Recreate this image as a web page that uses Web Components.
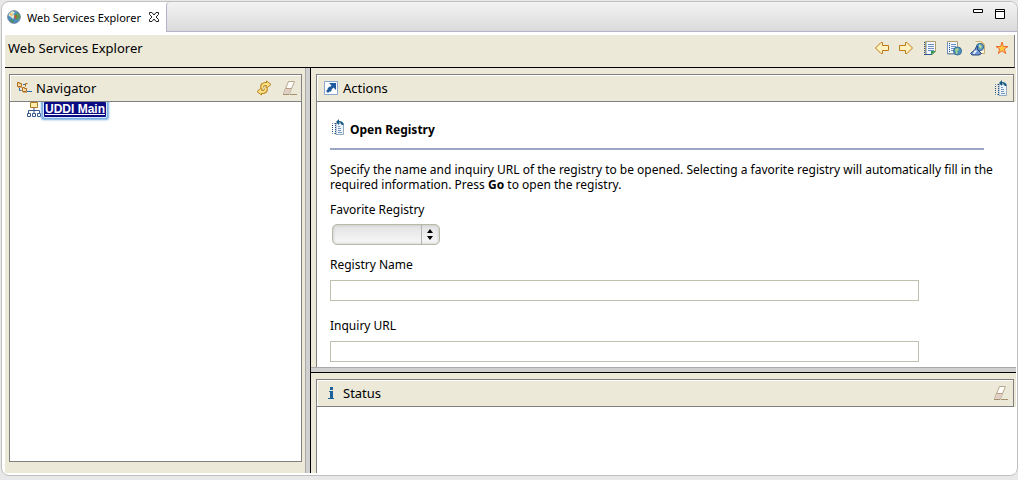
<!DOCTYPE html>
<html lang="en">
<head>
<meta charset="utf-8">
<title>Web Services Explorer</title>
<style>
  html, body { height: 100%; }
  body {
    margin: 0;
    background: #e8e8e8;
    color: #000;
    font: 12px/15px "Noto Sans", "Open Sans", sans-serif;
    overflow: hidden;
  }
</style>
</head>
<body>
<wse-window>
  <wse-toolbar slot="toolbar" heading="Web Services Explorer"></wse-toolbar>
  <wse-pane slot="navigator" heading="Navigator" icon="tree" tools="refresh,eraser" boxed>
    <wse-tree></wse-tree>
  </wse-pane>
  <wse-pane slot="actions" heading="Actions" icon="action" tools="registry">
    <wse-open-registry></wse-open-registry>
  </wse-pane>
  <wse-pane slot="status" heading="Status" icon="info" tools="eraser"></wse-pane>
</wse-window>

<script>
const sheetLines = (x, y, rows, w) =>
  Array.from({ length: rows }, (_, i) => `<path d="M${x} ${y + i * 2}h${w}" stroke="#6d8fc4"/>`).join('');

const ICONS = {
  globe: `<circle cx="8" cy="8" r="6.3" fill="#4a8ec6" stroke="#6b7f95"/>
    <path d="M2.5 6.500C3 4 5 2.300 7.500 2.200L9 4 7 5l2 2-2 3-2-2z" fill="#e4ecc8"/>
    <path d="M10 4l3 1 .8 3-2 3-2-1-1-3z" fill="#5c9a4a"/><path d="M4 10l3 1 1 3-3-1z" fill="#4f8f58"/>
    <path d="M8 6l3 1-2 4z" fill="#c1503c"/><path d="M4 4l3 1-1 2-2-1z" fill="#e8b56a"/>`,
  tree: `<path d="M7 4.500h2M3.500 7v3.500h2M11 11.500h5" fill="none" stroke="#2f6ea8"/>
    <g fill="#fbdca4" stroke="#b06c1c"><path d="M1.500 6.500v-4h2v1h2v3z"/><path d="M6.500 11.500v-4h2v1h2v3z"/><path d="M9.500 6.500v-3h2"/></g>
    <path d="M2 7.500h4M7 12.500h4" stroke="#d3a373"/>`,
  refresh: `<g fill="none" stroke-linejoin="round"><path d="M6.500 8C5.500 5.500 7 3.500 11 4M9.500 8c1 2.500-.500 4.500-4.500 4" stroke="#b98218" stroke-width="4"/>
    <path d="M10.500 1l4.500 3.500-5 4zM5.500 15L1 11.500l5-4z" fill="#ffe48a" stroke="#b98218"/>
    <path d="M6.500 8C5.500 5.500 7 3.500 11.500 4M9.500 8c1 2.500-.500 4.500-5 4" stroke="#ffe48a" stroke-width="2"/></g>`,
  eraser: `<path d="M6.500 1.500h6L7 14.500H1.500v-1z" fill="#fefdfb" stroke="#b5a68e"/><path d="M4.500 8h5l-2.500 6H2v-1z" fill="#e0cfc2"/><path d="M4 8.500h5.500" stroke="#b89c84"/><path d="M8 14.500h7M1 14.500h6" stroke="#a3916f"/>`,
  action: `<path d="M1.500 1.500h13v13h-13z" fill="#fff" stroke="#8aa6cc"/><path d="M6 3h7v7l-2.500-2.500-2 2 .500.500-2 2-.500-.500L5 13l-2-2 2-2-.500-.500 2-2 .500.500 1.500-1.500z" fill="#1d5b9e"/>`,
  registry: `<path d="M6 4.500h7.500v11H6z" fill="#eef4fb" stroke="#93a9bd"/><path d="M8 7.500h2M8 9.500h3M8 11.500h3M8 13.500h4" stroke="#7697bd"/>
    <path d="M2.500 4v11M5.500 4v11" stroke="#1c4d83" stroke-dasharray="1 1"/><path d="M2 4.500h4M2 14.500h4" stroke="#7f9db8" stroke-dasharray="1 1"/>
    <path d="M6 3l3-3v2c3 0 4.500 1 4.500 4h-2c0-2-1-2.500-2.500-2.500V6z" fill="#155a84"/>`,
  info: `<path d="M7 2h3v3H7zM6 6h4v7h1v1H5v-1h2V7H6z" fill="#1b639c"/>`,
  uddi: `<path d="M8 6v3M2.500 11V8.500h11V11M8 8v3" fill="none" stroke="#38598c"/><path d="M4.500.500h7v5h-7z" fill="#ffedac" stroke="#b07a24"/>
    <path d="M1.500 11.500h3v3h-3zM6.500 11.500h3v3h-3zM11.500 11.500h3v3h-3z" fill="#fff" stroke="#38598c"/>`,
  back: `<path d="M1.500 8L7 2.500h1.500v3h6v5h-6v3H7z" fill="#fff0c0" stroke="#c17a12"/>`,
  forward: `<path d="M14.500 8L9 2.500H7.500v3h-6v5h6v3H9z" fill="#fff0c0" stroke="#c17a12"/>`,
  history: `<path d="M3.500 1.500h10v10l-3 3h-7z" fill="#f3f8ff" stroke="#b09c68"/><path d="M4.500 2v12" stroke="#a9bedd"/>${sheetLines(6, 4.5, 4, 6)}
    <path d="M2.500 2v13" stroke="#1c4d83" stroke-dasharray="1 1"/><path d="M3 14.500h7" stroke="#31559a"/><path d="M9 15v-4h5z" fill="#2f9a55"/>`,
  wsdl: `<path d="M1.500 1.500h10v12h-10z" fill="#f3f8ff" stroke="#b09c68"/><path d="M1.500 2v12h8" fill="none" stroke="#6d8fc4"/>${sheetLines(5, 4.5, 4, 5)}
    <path d="M3.500 3v10" stroke="#1c4d83" stroke-dasharray="1 1"/><circle cx="11.500" cy="11" r="4" fill="#4c91bd" stroke="#3a6f96"/><path d="M9 9l3-1 1 2-2 1 1 2-2 1z" fill="#a7d38c"/>`,
  wsil: `<path d="M5.500 1.500h6l3 3v9h-8" fill="#fff6dc" stroke="#c7ad72"/><path d="M11 1v4h4z" fill="#f0c878"/><circle cx="10" cy="7" r="3.700" fill="#5897bd" stroke="#3b6d98"/><path d="M9 4l3 2-1 3-2-2z" fill="#b9dba0"/>
    <path d="M6.500 6.500h1v3l4 4-2.500 1.500H2L.500 13.500l4.500-4z" fill="#6f94cf" stroke="#27477f"/><path d="M4.500 10.500h3l-3 3.500H3z" fill="#eef4ff"/>`,
  star: `<path d="M8 2l1.400 4.500h4.600l-3.700 2.500 1.400 4.500L8 10.800l-3.700 2.700 1.400-4.500L2 6.500h4.600z" fill="#ffc845" stroke="#ee6c30"/>`,
  close: `<path d="M3.500 3.500h2.500l2 2.500 2-2.500h2.500v2L10 8l2.500 2.500v2H10L8 10l-2 2.500H3.500v-2L6 8 3.500 5.500z" fill="#fff" stroke="#222"/>`,
  minimize: `<path d="M3.500 3.500h9v3h-9z" fill="#fff" stroke="#000"/>`,
  maximize: `<path d="M3.500 3.500h9v9h-9zM3 5.500h10" fill="#fff" stroke="#000"/>`
};

class WseElement extends HTMLElement {
  connectedCallback() {
    if (this.shadowRoot) return;
    this.attachShadow({ mode: 'open' }).innerHTML = this.render();
  }
}

customElements.define('wse-icon', class extends WseElement {
  render() {
    return `<style>:host { display: block; flex: none; width: 16px; height: 16px; } svg { display: block; }</style>
      <svg width="16" height="16" viewBox="0 0 16 16" aria-hidden="true">${ICONS[this.getAttribute('name')]}</svg>`;
  }
});

const button = (name, label) =>
  `<button type="button" aria-label="${label}"><wse-icon name="${name}"></wse-icon></button>`;
const buttonCss = 'button { display: block; padding: 0; border: 0; background: none; }';

customElements.define('wse-window', class extends WseElement {
  render() {
    return `<style>
      :host { display: flex; flex-direction: column; box-sizing: border-box; height: 100vh; padding: 1px 0 4px 1px; }
      .shell { flex: 1; min-height: 0; display: flex; flex-direction: column; background: #fff;
        border: 1px solid #c0c0c0; border-radius: 8px; overflow: hidden; }
      .tabs { flex: none; display: flex; height: 30px; }
      .tab { display: flex; align-items: center; gap: 5px; padding: 0 4px; font-size: 11px; white-space: nowrap; }
      .rest { flex: 1; display: flex; justify-content: flex-end; gap: 6px; padding: 4px 9px 0 0;
        background: linear-gradient(#f3f3f3, #dadada); border: solid #b4b4cc; border-width: 0 0 1px 1px;
        border-top-left-radius: 4px; }
      ${buttonCss}
      .rest button { align-self: flex-start; }
      .page { flex: 1; min-height: 0; display: flex; flex-direction: column; margin: 3px 1px 2px 3px; }
      .frames { flex: 1; min-height: 0; display: grid; grid-template-columns: 300px 6px minmax(0, 1fr); background: #ece9d8; }
      .right { display: grid; grid-template-rows: 3fr 6px 1fr; min-width: 0; min-height: 0; }
      .split { background: #d0d0d0; }
      .v { border-right: 1px solid #000; border-left: 1px solid #aaa; }
      .h { border-bottom: 1px solid #000; border-top: 1px solid #aaa; }
    </style>
    <div class="shell">
      <div class="tabs">
        <div class="tab"><wse-icon name="globe"></wse-icon><span>Web Services Explorer</span>${button('close', 'Close')}</div>
        <div class="rest">${button('minimize', 'Minimize')}${button('maximize', 'Maximize')}</div>
      </div>
      <div class="page">
        <slot name="toolbar"></slot>
        <div class="frames">
          <slot name="navigator"></slot>
          <div class="split v"></div>
          <div class="right">
            <slot name="actions"></slot>
            <div class="split h"></div>
            <slot name="status"></slot>
          </div>
        </div>
      </div>
    </div>`;
  }
});

customElements.define('wse-toolbar', class extends WseElement {
  render() {
    return `<style>
      :host { display: flex; flex: none; align-items: center; justify-content: space-between; box-sizing: border-box; height: 33px;
        margin-right: 1px; padding: 0 4px 6px 3px; background: #ece9d8; border-bottom: 1px solid #000; border-right: 1px solid #808080; }
      h1 { margin: 0; font-size: 13px; font-weight: normal; }
      nav { display: flex; gap: 8px; }
      ${buttonCss}
    </style>
    <h1>${this.getAttribute('heading')}</h1>
    <nav>${button('back', 'Back')}${button('forward', 'Forward')}${button('history', 'UDDI page')}${button('wsdl', 'WSDL page')}${button('wsil', 'WSIL page')}${button('star', 'Favorites')}</nav>`;
  }
});

customElements.define('wse-pane', class extends WseElement {
  render() {
    const tools = this.getAttribute('tools').split(',').map(t => button(t, t)).join('');
    return `<style>
      :host { display: flex; flex-direction: column; min-width: 0; min-height: 0; overflow: hidden; padding: 6px 0 0 5px; }
      :host([boxed]) { padding: 6px 3px 11px 4px; }
      header { flex: none; display: flex; align-items: center; box-sizing: border-box; height: 28px; margin-right: 2px; padding: 0 4px 0 6px;
        background: #ece9d8; border: 1px solid #808080; box-shadow: inset 1px 1px #fff; gap: 4px; }
      :host([boxed]) header { margin-right: 0; padding-right: 3px; }
      h2 { flex: 1; margin: 0; font-size: 13px; font-weight: normal; }
      .tools { display: flex; gap: 10px; }
      .body { flex: 1; min-height: 0; overflow: hidden; background: #fff; border-left: 1px solid #808080; }
      :host([boxed]) .body { border-right: 1px solid #808080; border-bottom: 1px solid #808080; }
      ${buttonCss}
    </style>
    <header><wse-icon name="${this.getAttribute('icon')}"></wse-icon><h2>${this.getAttribute('heading')}</h2><div class="tools">${tools}</div></header>
    <div class="body"><slot></slot></div>`;
  }
});

customElements.define('wse-tree', class extends WseElement {
  render() {
    return `<style>
      :host { display: flex; align-items: flex-start; gap: 2px; padding-left: 16px; }
      a { padding: 0 1px; background: #0a0a82; color: #fff; font: bold 12px/15px "Liberation Sans", sans-serif;
        border-radius: 1px; box-shadow: 0 0 0 1px #d4e8fa, 0 0 2px 3px #78ade0; }
    </style>
    <wse-icon name="uddi"></wse-icon><a href="#uddi">UDDI Main</a>`;
  }
});

customElements.define('wse-open-registry', class extends WseElement {
  render() {
    return `<style>
      :host { display: block; padding: 16px 32px 0 13px; }
      h3 { display: flex; align-items: center; gap: 4px; margin: 0; height: 18px; font-size: 12px; }
      h3 span { padding-top: 4px; }
      hr { height: 2px; margin: 12px 0; border: 0; background: #9ba5c5; }
      p { margin: 0 0 10px; white-space: nowrap; }
      label { display: block; }
      .select { display: block; width: 108px; margin: 7px 0 12px 2px; position: relative; }
      select { display: block; appearance: none; box-sizing: border-box; width: 100%; height: 21px; margin: 0;
        border: 1px solid #b9b9a8; border-radius: 5px; background: linear-gradient(#e2e2e2, #f8f8f8); box-shadow: inset 0 0 3px #bbb; }
      .select svg { position: absolute; right: 0; top: 0; pointer-events: none; }
      input { display: block; box-sizing: border-box; width: 90%; height: 21px; margin: 8px 0 17px; padding: 2px 4px;
        border: 1px solid #c0c0ae; background: #fff; font: inherit; }
    </style>
    <h3><wse-icon name="registry"></wse-icon><span>Open Registry</span></h3>
    <hr>
    <p>Specify the name and inquiry URL of the registry to be opened. Selecting a favorite registry will automatically fill in the<br>required information. Press <b>Go</b> to open the registry.</p>
    <label for="favorite">Favorite Registry</label>
    <div class="select"><select id="favorite"></select>
      <svg width="19" height="21" viewBox="0 0 19 21" aria-hidden="true"><path d="M.5 1v19" stroke="#b4b4b4"/><path d="M6 9h6L9 5zM6 12h6l-3 4z"/></svg></div>
    <label for="name">Registry Name</label>
    <input id="name" type="text">
    <label for="url">Inquiry URL</label>
    <input id="url" type="text">`;
  }
});
</script>
</body>
</html>
